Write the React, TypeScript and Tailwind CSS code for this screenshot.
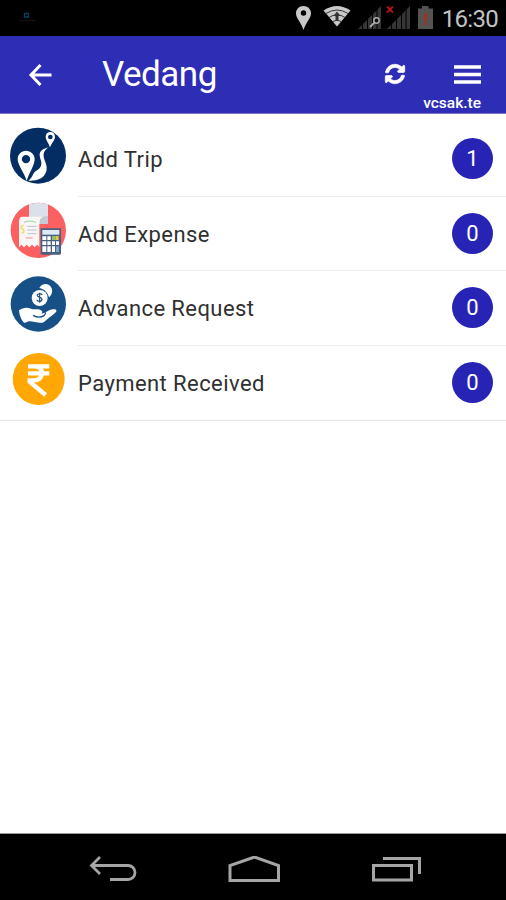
import type { ReactNode } from 'react'
import { FaSyncAlt } from 'react-icons/fa'

interface MenuItem {
  label: string
  count: number
  icon: ReactNode
}

function TripIcon() {
  return (
    <svg width="76" height="76" viewBox="0 0 228 228">
      <circle cx="114" cy="110" r="84" fill="#042e63" />
      <path
        fill="#fff"
        fillRule="evenodd"
        d="M78 95c-14 0-25 11-25 25 0 18 17 36 27 65 10-29 24-47 24-65 0-14-12-25-26-25Zm0 13a12 12 0 1 1 0 25 12 12 0 0 1 0-25Z"
      />
      <path
        fill="#fff"
        fillRule="evenodd"
        d="M151 39c-8 0-14 6-14 14 0 10 8 17 13 32 6-15 15-22 15-32 0-8-6-14-14-14Zm0 8a7 7 0 1 1 0 14 7 7 0 0 1 0-14Z"
      />
      <path
        fill="#fff"
        d="M146 85c-20 5-28 13-27 24 1 13 8 20 4 31-4 12-16 14-21 21-4 7-7 16-17 24 20 0 37-3 47-15 13-16 8-31 2-46-6-17-4-29 12-39Z"
      />
    </svg>
  )
}

function ExpenseIcon() {
  return (
    <svg width="76" height="76" viewBox="0 0 228 228">
      <circle cx="115" cy="109" r="83" fill="#fc6060" />
      <path fill="#dce0ea" d="M87 31q28-10 57 0v59H87Z" />
      <path fill="#c4c9d6" d="M119 69l25-3v24h-25Z" />
      <path fill="#faf6f3" d="M66 68h64q-12 4-12 18v72l-7-6-7 8-8-8-8 8-8-8-8 8-8-8-7 8V82q0-12 9-14Z" />
      <path stroke="#a9dfb0" strokeWidth="4" d="M72 85q17-7 36 0" fill="none" />
      <path stroke="#f5d977" strokeWidth="5" d="M70 93q-12 8-2 13 9 3-2 12" fill="none" />
      <path stroke="#b8bed2" strokeWidth="3" d="M82 97h28M82 108h28M82 119h28" />
      <path stroke="#f8a6ae" strokeWidth="4" d="M78 132h20" />
      <path fill="#4a6080" d="M122 103h61v75q0 4-4 4h-53q-4 0-4-4Z" />
      <path fill="#dceaf3" d="M127 108h51v14h-51Z" />
      <path
        fill="#fff"
        d="M127 127h12v11h-12ZM142 127h10v11h-10ZM127 142h12v11h-12ZM142 142h10v11h-10ZM156 142h9v11h-9ZM168 142h9v11h-9ZM127 157h12v17h-12ZM142 157h10v17h-10ZM156 157h9v17h-9Z"
      />
      <path fill="#8fc35c" d="M156 126h9v12h-9Z" />
      <path fill="#e2c554" d="M166 126h10v12h-10Z" />
      <path fill="#7fa8cc" d="M168 157h9v17h-9Z" />
    </svg>
  )
}

function AdvanceIcon() {
  return (
    <svg width="76" height="76" viewBox="0 0 228 228">
      <circle cx="115" cy="108" r="83" fill="#175086" />
      <path fill="#fff" d="M118 60c6-12 20-15 30-8 12 9 11 27-1 36-4-15-14-25-29-28Z" />
      <circle cx="119" cy="90" r="24" fill="#fff" />
      <path
        d="M127 81c-4-6-16-5-15 2 1 6 14 4 14 11 0 8-13 8-16 1M119 74v30"
        fill="none"
        stroke="#175086"
        strokeWidth="3.5"
      />
      <path
        fill="#fff"
        d="M57 127c11-9 25-10 36-5 8 4 16 0 27 3 7 2 9 8 5 12 13-2 22-13 34-13 11-1 14 5 6 11-10 9-22 17-32 26-10 8-29 0-45-1-6 0-9 5-16 4-8-7-14-23-15-37Z"
      />
      <path
        d="M99 142c12 7 25 6 33 1 4-3 5-7 4-10"
        fill="none"
        stroke="#175086"
        strokeWidth="4"
      />
    </svg>
  )
}

function RupeeIcon() {
  return (
    <svg width="76" height="76" viewBox="0 0 228 228">
      <circle cx="116" cy="108" r="78" fill="#ffa705" />
      <path
        d="M84 70h64M84 91h64M84 70h17c17 0 25 9 25 20 0 13-9 22-25 22H89v4l48 40"
        fill="none"
        stroke="#fff"
        strokeWidth="13"
      />
    </svg>
  )
}

const items: MenuItem[] = [
  { label: 'Add Trip', count: 1, icon: <TripIcon /> },
  { label: 'Add Expense', count: 0, icon: <ExpenseIcon /> },
  { label: 'Advance Request', count: 0, icon: <AdvanceIcon /> },
  { label: 'Payment Received', count: 0, icon: <RupeeIcon /> },
]

function StatusBar() {
  return (
    <div className="flex h-9 shrink-0 items-center justify-between bg-black pr-2 pl-[18px]">
      <svg width="20" height="14" viewBox="0 0 20 14" className="mt-1 mb-2">
        <path d="M6.5 8V4.5h4V8Z" fill="none" stroke="#0b3f5c" strokeWidth="1.3" />
        <path d="M1 11.5h17" stroke="#101216" />
      </svg>
      <div className="flex items-center">
        {/* location, wifi, two SIM signals, battery */}
        <svg width="137" height="36" viewBox="0 0 137 36">
          <path
            fill="#c9c9c9"
            fillRule="evenodd"
            d="M7.5 6C3.200 6 0 9.200 0 13.300 0 18.500 5 22 7.500 30 10 22 15 18.500 15 13.300 15 9.200 11.800 6 7.500 6Zm0 4.300a2.700 2.700 0 1 1 0 5.400 2.700 2.700 0 0 1 0-5.400Z"
          />
          <path fill="#c9c9c9" d="M27.500 10.500q13.500-9 27 0L41 26.500Z" />
          <path
            d="M30 13.500q11-7 22 0M33 17.500q8-5.500 16 0M37 21.500q4-3 8 0"
            fill="none"
            stroke="#333"
            strokeWidth="1"
          />
          <path d="M41 11.500l-3.500 4.500h2v5h3v-5h2Z" fill="#333" />
          <path
            fill="#353535"
            d="M62 29l4-4v4ZM67 29v-5l4-4v9ZM72 29V19l4-4v14ZM77 29V14l3.500-3.500V29ZM81.500 29V9.500L85 6v23Z"
          />
          <circle cx="80.500" cy="20.500" r="2.700" fill="#111" stroke="#aaa" strokeWidth="1.500" />
          <path d="M78.500 22.500l-4.500 4.500" stroke="#aaa" strokeWidth="1.800" />
          <path
            fill="#353535"
            d="M91 29l4-4v4ZM96 29v-5l4-4v9ZM101 29V19l4-4v14ZM106 29V14l3.500-3.500V29ZM110.500 29V9.500L114 6v23Z"
          />
          <path d="M91 6.500l6 6M97 6.500l-6 6" stroke="#b31320" strokeWidth="1.800" />
          <path fill="#535353" d="M126 6h6.500v2.500h4.500V29h-15V8.500h4Z" />
          <path d="M129.500 13v8M129.500 22.500v2.500" stroke="#a52f27" strokeWidth="3" />
        </svg>
        <span className="ml-[9px] pt-px text-[24px] leading-none tracking-[-0.7px] text-[#c4c4c4]">16:30</span>
      </div>
    </div>
  )
}

function Header() {
  return (
    <header className="flex h-[78px] shrink-0 border-b border-[#7774cf] bg-[#2e2db5] pr-[25px] pl-7 text-white">
      <svg width="24" height="24" viewBox="0 0 24 24" className="mt-[27px]">
        <path d="M12.500 2L3 12l9.500 10M3 12h20.500" fill="none" stroke="currentColor" strokeWidth="3" />
      </svg>
      <h1 className="mt-[18px] ml-[50px] text-[35px] leading-[42px] tracking-[-0.5px]">Vedang</h1>
      <div className="ml-auto flex flex-col items-end">
        <div className="mt-7 flex items-center gap-[49px]">
          <FaSyncAlt size={20} className="overflow-visible stroke-white" strokeWidth={18} />
          <svg width="27" height="20" viewBox="0 0 27 20">
            <path d="M0 3h27M0 10.500h27M0 18h27" stroke="currentColor" strokeWidth="3.500" />
          </svg>
        </div>
        <span className="mt-[10px] text-[15.5px] leading-[19px] font-medium">vcsak.te</span>
      </div>
    </header>
  )
}

function MenuRow({ item, last }: { item: MenuItem; last: boolean }) {
  return (
    <li className={last ? 'flex h-[75px] border-b border-[#e6e6e6]' : 'flex h-[74.5px]'}>
      <div className="-mt-[3px] h-full w-[78px] shrink-0">{item.icon}</div>
      <div
        className={
          last
            ? 'flex flex-1 items-center justify-between pr-[13px]'
            : 'flex flex-1 items-center justify-between border-b border-[#ececec] pr-[13px]'
        }
      >
        <span className="pt-[3px] text-[22px] leading-7 tracking-[0.42px] text-[#303030]">{item.label}</span>
        <span className="flex size-[41px] items-center justify-center rounded-full bg-[#2724b5] text-[22px] text-white">
          {item.count}
        </span>
      </div>
    </li>
  )
}

function NavBar() {
  return (
    <nav className="flex h-[67px] shrink-0 items-center justify-between border-t border-[#999] bg-black pt-[5px] pr-[85px] pl-[89px] text-[#a5a5a5]">
      <svg width="48" height="28" viewBox="0 0 48 28" fill="none" stroke="currentColor" strokeWidth="2.800">
        <path d="M11 1L2.500 9.500 11 18M2.500 9.500H39a7 7 0 0 1 0 14H21" />
      </svg>
      <svg width="54" height="28" viewBox="0 0 54 28" fill="none" stroke="currentColor" strokeWidth="3">
        <path d="M3 23.500V8.500L27.500 0 51.500 8.500v15Z" className="translate-y-px" />
      </svg>
      <svg width="50" height="28" viewBox="0 0 50 28" fill="none" stroke="currentColor" strokeWidth="3">
        <path d="M2.500 9.500H40.500v14.500h-38ZM12 2.500H48.500V18" />
      </svg>
    </nav>
  )
}

export default function App() {
  return (
    <div className="flex h-[900px] w-[506px] flex-col overflow-hidden bg-white font-[Roboto,sans-serif]">
      <StatusBar />
      <Header />
      <main className="flex-1 pt-[8px]">
        <ul>
          {items.map((item, i) => (
            <MenuRow key={item.label} item={item} last={i === items.length - 1} />
          ))}
        </ul>
      </main>
      <NavBar />
    </div>
  )
}
